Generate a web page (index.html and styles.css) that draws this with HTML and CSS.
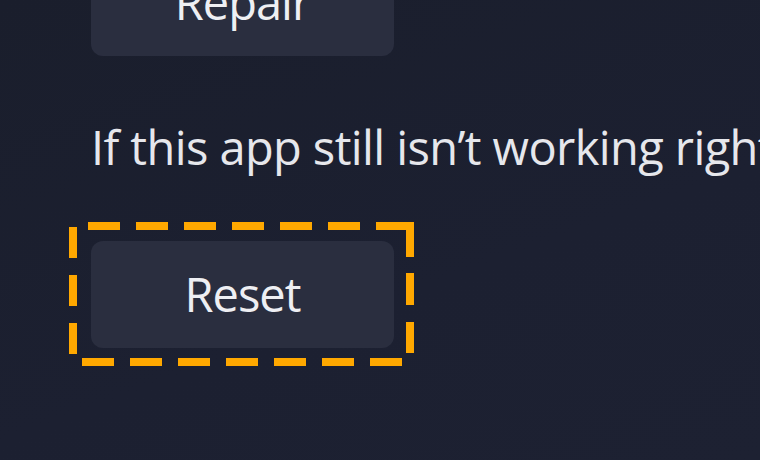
FILE: index.html
```
<!DOCTYPE html>
<html lang="en">
<head>
  <meta charset="UTF-8">
  <title>Reset app</title>
  <link rel="stylesheet" href="styles.css">
</head>
<body>
  <div class="panel">
    <button type="button" class="btn btn-repair">Repair</button>

    <p class="note">If this app still isn’t working right, reset it. The app’s data will be deleted.</p>

    <div class="highlight">
      <button type="button" class="btn">Reset</button>
      <!-- dashed callout round the reset button -->
      <svg class="callout" width="345" height="144" viewBox="0 0 345 144">
        <g fill="none" stroke="#ffa800" stroke-width="8">
          <line x1="19" y1="4" x2="307" y2="4" stroke-dasharray="32 16"/>
          <path d="M307 4 H341 V35"/>
          <line x1="341" y1="51" x2="341" y2="131" stroke-dasharray="32 17"/>
          <line x1="13" y1="140" x2="333" y2="140" stroke-dasharray="32 16"/>
          <line x1="4" y1="5" x2="4" y2="133" stroke-dasharray="31 17"/>
        </g>
      </svg>
    </div>
  </div>
</body>
</html>
```

FILE: styles.css
```
html, body {
  margin: 0;
  height: 100%;
  overflow: hidden;
}
body {
  background: linear-gradient(160deg, #1a1e2c 0%, #1c2031 60%, #1d2132 100%);
  font-family: "Open Sans", "Noto Sans", sans-serif;
  color: #e6e7ec;
}
.panel {
  display: flex;
  flex-direction: column;
  align-items: flex-start;
  padding-left: 91px;
}
.btn {
  width: 303px;
  height: 107px;
  border: none;
  border-radius: 12px;
  background-color: #2a2e3f;
  color: #eeeff3;
  font-family: inherit;
  font-size: 47px;
  letter-spacing: -1px;
  line-height: 1;
  padding: 0;
  cursor: pointer;
}
.btn-repair {
  margin-top: -51px;
}
.note {
  margin: 61px 0 0 0;
  font-size: 47px;
  letter-spacing: -0.6px;
  line-height: 60px;
  white-space: nowrap;
}
.highlight {
  position: relative;
  margin-top: 64px;
}
.callout {
  position: absolute;
  left: -22px;
  top: -19px;
}
```
